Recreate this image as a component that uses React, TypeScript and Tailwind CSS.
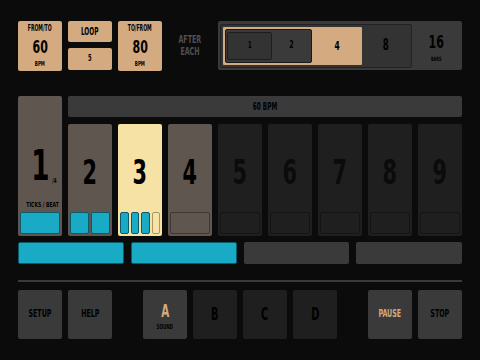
import React from 'react';

const FONT = "font-['DejaVu_Sans_Condensed','Liberation_Sans_Narrow',sans-serif] font-bold";

const beats = [2, 3, 4, 5, 6, 7, 8, 9];

// narrow glyphs, the reference face is very condensed
function T({ children, className = '' }: { children: React.ReactNode; className?: string }) {
  return <span className={`inline-block origin-center scale-x-[0.64] whitespace-nowrap ${className}`}>{children}</span>;
}

function Ticks({ count, filled, tone }: { count: number; filled: number; tone: 'brown' | 'yellow' | 'dark' }) {
  const empty =
    tone === 'yellow'
      ? 'border-[#a89868] bg-[#f5e2a4]'
      : tone === 'brown'
        ? 'border-[#3e3834] bg-[#5f5650]'
        : 'border-[#141414] bg-[#1f1f1f]';
  return (
    <div className="flex h-[22px] gap-[2px]">
      {Array.from({ length: count }).map((_, i) => (
        <div
          key={i}
          className={`flex-1 rounded-[2px] border ${i < filled ? 'border-[#0c5a6a] bg-[#19aac5]' : empty}`}
        />
      ))}
    </div>
  );
}

function BeatColumn({ n }: { n: number }) {
  const tone = n === 3 ? 'yellow' : n <= 4 ? 'brown' : 'dark';
  const bg = tone === 'yellow' ? 'bg-[#f5e2a4]' : tone === 'brown' ? 'bg-[#5f5650]' : 'bg-[#1f1f1f]';
  const text = tone === 'dark' ? 'text-[#0b0b0b]' : 'text-black';
  const ticks = n === 2 ? { c: 2, f: 2 } : n === 3 ? { c: 4, f: 3 } : { c: 1, f: 0 };
  return (
    <div className={`flex h-[112px] w-[44px] flex-col rounded-[2px] px-[2px] pb-[2px] ${bg}`}>
      <div className={`flex flex-1 items-center justify-center pt-[8px] text-[34px] leading-none ${text}`}>
        <T className="scale-x-[0.68]">{n}</T>
      </div>
      <Ticks count={ticks.c} filled={ticks.f} tone={tone} />
    </div>
  );
}

function TopBox({ label, value, unit }: { label: string; value: string; unit: string }) {
  return (
    <div className="flex h-[50px] w-[44px] flex-col items-center justify-between rounded-[2px] bg-[#d4aa80] pb-[3px] pt-[4px] text-black">
      <div className="text-[8px] leading-none"><T>{label}</T></div>
      <div className="text-[18px] leading-none"><T className="scale-x-[0.68]">{value}</T></div>
      <div className="text-[7px] leading-none"><T>{unit}</T></div>
    </div>
  );
}

function Btn({ children, tone = 'gray' }: { children: React.ReactNode; tone?: 'gray' | 'dark' }) {
  return (
    <div
      className={`flex h-[49px] w-[44px] flex-col items-center justify-center rounded-[2px] ${
        tone === 'gray' ? 'bg-[#3a3a3a]' : 'bg-[#1f1f1f]'
      }`}
    >
      {children}
    </div>
  );
}

export default function App() {
  return (
    <div className={`flex h-[360px] w-[480px] flex-col bg-[#0b0b0b] px-[18px] pt-[21px] ${FONT}`}>
      {/* top controls */}
      <div className="flex h-[49px] items-center">
        <div className="flex gap-[6px]">
          <TopBox label="FROM/TO" value="60" unit="BPM" />
          <div className="flex w-[44px] flex-col gap-[6px]">
            <div className="flex h-[21px] items-center justify-center rounded-[2px] bg-[#d4aa80] text-[10px] text-black"><T>LOOP</T></div>
            <div className="flex h-[22px] items-center justify-center rounded-[2px] bg-[#d4aa80] text-[9px] text-black"><T>5</T></div>
          </div>
          <TopBox label="TO/FROM" value="80" unit="BPM" />
        </div>
        <div className="ml-[16px] flex w-[24px] flex-col items-center text-[11px] leading-[12px] text-[#505050]">
          <T>AFTER</T>
          <T>EACH</T>
        </div>
        <div className="ml-[16px] flex h-[49px] flex-1 items-center rounded-[2px] bg-[#3a3a3a] pl-[2px] pr-[2px]">
          <div className="flex h-[44px] w-[192px] items-center rounded-[2px] border border-[#222] bg-[#333] px-[2px]">
            <div className="flex h-[38px] w-[139px] items-center rounded-[1px] bg-[#d4aa80] pl-[2px]">
              <div className="flex h-[34px] w-[87px] items-center rounded-[2px] border border-[#1a1a1a] bg-[#3a3a3a] pl-[1px]">
                <div className="flex h-[28px] w-[45px] items-center justify-center rounded-[2px] border border-[#1e1e1e] bg-[#333] text-[9px] text-black">
                  <T>1</T>
                </div>
                <div className="flex flex-1 items-center justify-center text-[11px] text-black"><T>2</T></div>
              </div>
              <div className="flex flex-1 items-center justify-center text-[13px] text-black"><T>4</T></div>
            </div>
            <div className="flex flex-1 items-center justify-center text-[15px] text-black"><T>8</T></div>
          </div>
          <div className="flex flex-1 flex-col items-center pt-[4px] text-black">
            <div className="text-[18px] leading-none"><T className="scale-x-[0.68]">16</T></div>
            <div className="mt-[5px] text-[6px] leading-none"><T>BARS</T></div>
          </div>
        </div>
      </div>

      {/* beats */}
      <div className="mt-[26px] flex gap-[6px]">
        <div className="flex h-[140px] w-[44px] flex-col rounded-[2px] bg-[#5f5650] px-[2px] pb-[2px]">
          <div className="flex flex-1 items-end justify-center pb-[15px] pl-[4px] text-black">
            <T className="scale-x-[0.68] text-[43px] leading-none">1</T>
            <T className="-ml-[3px] mb-[2px] text-[7px] leading-none">/4</T>
          </div>
          <div className="mb-[3px] text-center text-[7px] leading-none text-black"><T className="scale-x-[0.72]">TICKS / BEAT</T></div>
          <Ticks count={1} filled={1} tone="brown" />
        </div>
        <div className="flex flex-1 flex-col gap-[7px]">
          <div className="flex h-[21px] items-center justify-center rounded-[2px] bg-[#3a3a3a] text-[10px] text-black"><T>60 BPM</T></div>
          <div className="flex justify-between">
            {beats.map((n) => (
              <BeatColumn key={n} n={n} />
            ))}
          </div>
        </div>
      </div>

      {/* bars progress */}
      <div className="mt-[6px] grid grid-cols-4 gap-[7px]">
        <div className="h-[22px] rounded-[2px] border border-[#0c5a6a] bg-[#19aac5]" />
        <div className="h-[22px] rounded-[2px] border border-[#0c5a6a] bg-[#19aac5]" />
        <div className="h-[22px] rounded-[2px] bg-[#3a3a3a]" />
        <div className="h-[22px] rounded-[2px] bg-[#3a3a3a]" />
      </div>

      <div className="mt-[16px] h-[2px] bg-[#3a3a3a]" />

      {/* bottom buttons */}
      <div className="mt-[8px] flex">
        <div className="flex gap-[6px]">
          <Btn>
            <span className="text-[11px] text-black"><T>SETUP</T></span>
          </Btn>
          <Btn>
            <span className="text-[11px] text-black"><T>HELP</T></span>
          </Btn>
        </div>
        <div className="ml-[31px] flex gap-[6px]">
          <Btn>
            <span className="mt-[4px] text-[18px] leading-none text-[#d4aa80]"><T>A</T></span>
            <span className="mt-[4px] text-[7px] leading-none text-black"><T>SOUND</T></span>
          </Btn>
          <Btn tone="dark">
            <span className="text-[17px] text-black"><T>B</T></span>
          </Btn>
          <Btn tone="dark">
            <span className="text-[17px] text-black"><T>C</T></span>
          </Btn>
          <Btn tone="dark">
            <span className="text-[17px] text-black"><T>D</T></span>
          </Btn>
        </div>
        <div className="ml-auto flex gap-[6px]">
          <Btn>
            <span className="text-[11px] text-[#d4aa80]"><T>PAUSE</T></span>
          </Btn>
          <Btn>
            <span className="text-[11px] text-black"><T>STOP</T></span>
          </Btn>
        </div>
      </div>
    </div>
  );
}
